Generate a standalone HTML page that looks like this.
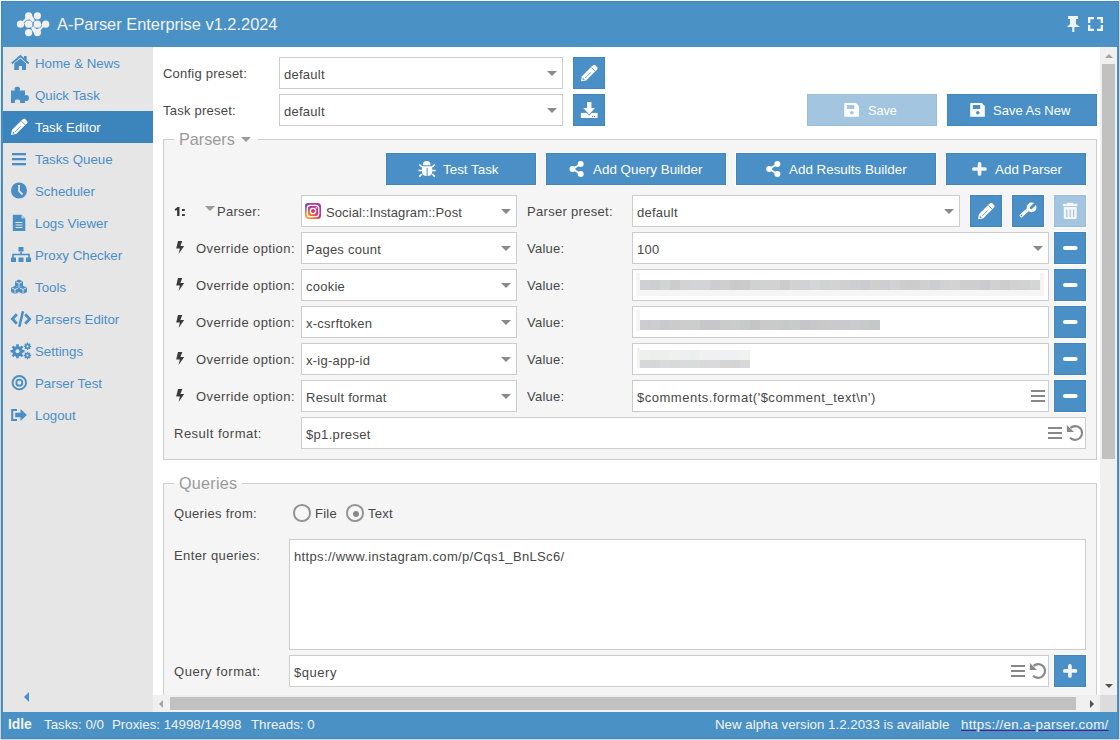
<!DOCTYPE html>
<html><head><meta charset="utf-8">
<style>
*{box-sizing:border-box;margin:0;padding:0}
html,body{width:1120px;height:740px;overflow:hidden;background:#fbfaf8;font-family:"Liberation Sans",sans-serif;color:#333}
.a{position:absolute}
#frame{left:1px;top:1px;width:1118px;height:738px;background:#4a91c6;border:1px solid #3f88c1}
#hdr-title{left:57px;top:13px;font-size:16.4px;color:#f2f2f2;line-height:22px;white-space:nowrap}
#side{left:3px;top:47px;width:150px;height:665px;background:#e6e6e6}
.si{left:0;width:150px;height:32px;line-height:34px;font-size:13.3px;color:#4a8ec6;white-space:nowrap}
.si span{position:absolute;left:32px;top:0}
.si svg{position:absolute;left:8px;top:8px}
.si.act{background:#3c84bc;color:#fff}
#content{left:153px;top:47px;width:964px;height:648px;background:#fff;overflow:hidden}
.lbl{font-size:13px;letter-spacing:0.25px;line-height:34px;height:32px;white-space:nowrap;color:#474747}
.inp{background:#fff;border:1px solid #ccc;height:32px;font-size:13px;letter-spacing:0.25px;line-height:34px;padding-left:4px;white-space:nowrap;color:#474747}
.tri{position:absolute;width:0;height:0;border-left:5px solid transparent;border-right:5px solid transparent;border-top:5px solid #8a8a8a}
.btn{background:#4a8fc5;border:1px solid #4086be;box-shadow:0 0 0 1px #fff;height:32px;color:#fff;font-size:13.4px;line-height:34px;white-space:nowrap}
.btn.dis{background:#a3c5e0;border-color:#98bedb}
.btn span{position:absolute;top:-1px;margin-left:-1px}
.btn svg{position:absolute}
.fs{border:1px solid #cdcdcd;border-top:0;background:#f5f5f5}
.ln{background:#cdcdcd;height:1px}
.legend{position:absolute;font-size:16.2px;color:#9a9a9a;line-height:20px;white-space:nowrap}
.legbg{position:absolute;background:#fff;height:10px}
#status{left:3px;top:712px;width:1114px;height:27px;}
.st{font-size:13.3px;color:#f4f4f4;line-height:25px;top:0;white-space:nowrap}
.radio{width:17.5px;height:17.5px;border:2px solid #959595;border-radius:50%;background:#f7f7f7}
.radio i{position:absolute;left:4.75px;top:4.75px;width:6px;height:6px;border-radius:50%;background:#8a8a8a}
</style></head><body>
<div id="frame" class="a"></div>
<div class="a" style="left:1119px;top:0;width:1px;height:740px;background:#dcd6d0"></div>
<div class="a" style="left:0;top:40px;width:1px;height:700px;background:linear-gradient(#f4f1ee,#d9d1cb 30%)"></div>
<div class="a" style="left:0;top:739px;width:1120px;height:1px;background:#dcd6d0"></div>
<!-- header -->
<div id="hdr-title" class="a">A-Parser Enterprise v1.2.2024</div>

<div id="side" class="a">
  <div class="si a" style="top:0"><span>Home &amp; News</span></div>
  <div class="si a" style="top:32px"><span>Quick Task</span></div>
  <div class="si a act" style="top:64px"><span>Task Editor</span></div>
  <div class="si a" style="top:96px"><span>Tasks Queue</span></div>
  <div class="si a" style="top:128px"><span>Scheduler</span></div>
  <div class="si a" style="top:160px"><span>Logs Viewer</span></div>
  <div class="si a" style="top:192px"><span>Proxy Checker</span></div>
  <div class="si a" style="top:224px"><span>Tools</span></div>
  <div class="si a" style="top:256px"><span>Parsers Editor</span></div>
  <div class="si a" style="top:288px"><span>Settings</span></div>
  <div class="si a" style="top:320px"><span>Parser Test</span></div>
  <div class="si a" style="top:352px"><span>Logout</span></div>
</div>

<div id="content" class="a"><div class="a" style="left:-153px;top:-47px;width:1120px;height:740px">
  <div class="lbl a" style="left:163px;top:57px;letter-spacing:0.22px">Config preset:</div>
  <div class="inp a" style="left:279px;top:57px;width:284px">default<i class="tri" style="left:267px;top:13px"></i></div>
  <div class="btn a" style="left:573px;top:57px;width:32px"></div>
  <div class="lbl a" style="left:163px;top:94px;letter-spacing:0.24px">Task preset:</div>
  <div class="inp a" style="left:279px;top:94px;width:284px">default<i class="tri" style="left:267px;top:13px"></i></div>
  <div class="btn a" style="left:573px;top:94px;width:32px"></div>
  <div class="btn dis a" style="left:807px;top:94px;width:130px"><span style="left:61px;font-size:12.6px">Save</span></div>
  <div class="btn a" style="left:947px;top:94px;width:150px"><span style="left:46px;font-size:13px">Save As New</span></div>

  <div class="fs a" style="left:163px;top:139px;width:934px;height:321px"></div>
  <div class="ln a" style="left:163px;top:139px;width:11px"></div><div class="ln a" style="left:258px;top:139px;width:839px"></div>
  <div class="legend a" style="left:179px;top:129px">Parsers</div>
  <i class="tri" style="left:241px;top:137px;border-top-color:#9a9a9a"></i>

  <div class="btn a" style="left:386px;top:153px;width:150px"><span style="left:57px">Test Task</span></div>
  <div class="btn a" style="left:546px;top:153px;width:180px"><span style="left:47px">Add Query Builder</span></div>
  <div class="btn a" style="left:736px;top:153px;width:200px"><span style="left:53px">Add Results Builder</span></div>
  <div class="btn a" style="left:946px;top:153px;width:140px"><span style="left:49px">Add Parser</span></div>

  
  <i class="tri" style="left:205px;top:206px;border-top-color:#9a9a9a"></i>
  <div class="lbl a" style="left:217px;top:195px">Parser:</div>
  <div class="inp a" style="left:301px;top:195px;width:216px;padding-left:24px;letter-spacing:0.1px">Social::Instagram::Post<i class="tri" style="left:199px;top:13px"></i></div>
  <div class="lbl a" style="left:527px;top:195px;letter-spacing:0.3px">Parser preset:</div>
  <div class="inp a" style="left:632px;top:195px;width:328px">default<i class="tri" style="left:311px;top:13px"></i></div>
  <div class="btn a" style="left:970px;top:195px;width:32px"></div>
  <div class="btn a" style="left:1012px;top:195px;width:32px"></div>
  <div class="btn dis a" style="left:1054px;top:195px;width:32px"></div>
  <div class="lbl a" style="font-size:13px;letter-spacing:0.4px;left:196px;top:232px">Override option:</div>
  <div class="inp a" style="left:301px;top:232px;width:216px">Pages count<i class="tri" style="left:199px;top:13px"></i></div>
  <div class="lbl a" style="left:527px;top:232px">Value:</div>
  <div class="inp a" style="left:632px;top:232px;width:417px">100<i class="tri" style="left:400px;top:13px"></i></div>
  <div class="btn a" style="left:1054px;top:232px;width:32px"></div>
  <div class="lbl a" style="font-size:13px;letter-spacing:0.4px;left:196px;top:269px">Override option:</div>
  <div class="inp a" style="left:301px;top:269px;width:216px">cookie<i class="tri" style="left:199px;top:13px"></i></div>
  <div class="lbl a" style="left:527px;top:269px">Value:</div>
  <div class="inp a" style="left:632px;top:269px;width:417px"></div>
  <div class="btn a" style="left:1054px;top:269px;width:32px"></div>
  <div class="lbl a" style="font-size:13px;letter-spacing:0.4px;left:196px;top:306px">Override option:</div>
  <div class="inp a" style="left:301px;top:306px;width:216px">x-csrftoken<i class="tri" style="left:199px;top:13px"></i></div>
  <div class="lbl a" style="left:527px;top:306px">Value:</div>
  <div class="inp a" style="left:632px;top:306px;width:417px"></div>
  <div class="btn a" style="left:1054px;top:306px;width:32px"></div>
  <div class="lbl a" style="font-size:13px;letter-spacing:0.4px;left:196px;top:343px">Override option:</div>
  <div class="inp a" style="left:301px;top:343px;width:216px">x-ig-app-id<i class="tri" style="left:199px;top:13px"></i></div>
  <div class="lbl a" style="left:527px;top:343px">Value:</div>
  <div class="inp a" style="left:632px;top:343px;width:417px"></div>
  <div class="btn a" style="left:1054px;top:343px;width:32px"></div>
  <div class="lbl a" style="font-size:13px;letter-spacing:0.4px;left:196px;top:380px">Override option:</div>
  <div class="inp a" style="left:301px;top:380px;width:216px">Result format<i class="tri" style="left:199px;top:13px"></i></div>
  <div class="lbl a" style="left:527px;top:380px">Value:</div>
  <div class="inp a" style="left:632px;top:380px;width:417px"><span style="letter-spacing:0.51px">$comments.format('$comment_text\n')</span></div>
  <div class="btn a" style="left:1054px;top:380px;width:32px"></div>

  <div class="a" style="left:636px;top:273px;width:4px;height:23px;background:#f6f5f4"></div>
<div class="a" style="left:640px;top:280px;width:400px;height:10px;background:linear-gradient(90deg,#ced1d1 0px 10px,#cdced0 10px 20px,#d2d5d1 20px 30px,#cbcdcc 30px 40px,#d3d3d3 40px 50px,#d2d5d5 50px 60px,#d2d4d6 60px 70px,#cdcdd1 70px 80px,#cdd0cf 80px 90px,#cbcacb 90px 100px,#cbccca 100px 110px,#cfd1d2 110px 120px,#d1d3d3 120px 130px,#d2d2d3 130px 140px,#cccbcc 140px 150px,#d2d2d3 150px 160px,#d1d2d3 160px 170px,#d3d5d6 170px 180px,#d0d3d3 180px 190px,#d1d4d1 190px 200px,#d0cfd1 200px 210px,#cdced0 210px 220px,#ccccd0 220px 230px,#cfd0ce 230px 240px,#ccced0 240px 250px,#d2d1d3 250px 260px,#cccecc 260px 270px,#cbcccd 270px 280px,#d1d0d0 280px 290px,#cbcdcf 290px 300px,#d0d3d1 300px 310px,#d3d3d2 310px 320px,#cfcece 320px 330px,#cccfcf 330px 340px,#cbcbcd 340px 350px,#cfd2d0 350px 360px,#cdccce 360px 370px,#d0d1d0 370px 380px,#d1d3d3 380px 390px,#d3d5d7 390px 400px)"></div>
<div class="a" style="left:640px;top:290px;width:404px;height:6px;background:#f5f5f5"></div>
<div class="a" style="left:1040px;top:273px;width:4px;height:23px;background:#f4f4f4"></div>
<div class="a" style="left:636px;top:310px;width:4px;height:21px;background:#f6f5f4"></div>
<div class="a" style="left:640px;top:320px;width:240px;height:10px;background:linear-gradient(90deg,#cdccd0 0px 10px,#cdcecf 10px 20px,#c8c9ca 20px 30px,#c9ccca 30px 40px,#cdcecc 40px 50px,#cbcecc 50px 60px,#c5c7c8 60px 70px,#c7c6cb 70px 80px,#cacccb 80px 90px,#cacdce 90px 100px,#c9cbc8 100px 110px,#c5c4c6 110px 120px,#c9cbca 120px 130px,#cacacb 130px 140px,#c7c8c8 140px 150px,#c9cacb 150px 160px,#c6c5c9 160px 170px,#c7c8ca 170px 180px,#c8c9c8 180px 190px,#cacace 190px 200px,#cbcaca 200px 210px,#cacbce 210px 220px,#c8cac8 220px 230px,#c6c7ca 230px 240px)"></div>
<div class="a" style="left:637px;top:348px;width:3px;height:20px;background:#f3f2f0"></div>
<div class="a" style="left:640px;top:350px;width:110px;height:10px;background:linear-gradient(90deg,#edf0ef 0px 10px,#eeeeed 10px 20px,#ecefec 20px 30px,#eef1ee 30px 40px,#eeeff2 40px 50px,#ecefed 50px 60px,#f0f0f2 60px 70px,#eef1ef 70px 80px,#eff0f3 80px 90px,#eff0f1 90px 100px,#f0f2ef 100px 110px)"></div>
<div class="a" style="left:640px;top:360px;width:110px;height:8px;background:linear-gradient(90deg,#d7d7d7 0px 10px,#d4d6d7 10px 20px,#d8dadb 20px 30px,#d9d9d8 30px 40px,#d9dbdd 40px 50px,#d9dcda 50px 60px,#d8d9d8 60px 70px,#dad9dd 70px 80px,#d6d5d6 80px 90px,#d4d3d8 90px 100px,#d8d8da 100px 110px)"></div>
  <div class="lbl a" style="left:174px;top:417px;letter-spacing:0.5px">Result format:</div>
  <div class="inp a" style="left:301px;top:417px;width:785px;letter-spacing:0.33px">$p1.preset</div>

  <div class="fs a" style="left:163px;top:483px;width:934px;height:300px"></div>
  <div class="ln a" style="left:163px;top:483px;width:11px"></div><div class="ln a" style="left:242px;top:483px;width:855px"></div>
  <div class="legend a" style="left:179px;top:473px;letter-spacing:0.25px">Queries</div>
  <div class="lbl a" style="left:174px;top:497px;letter-spacing:0.33px">Queries from:</div>
  <div class="a radio" style="left:293px;top:504px"></div>
  <div class="lbl a" style="left:315px;top:497px">File</div>
  <div class="a radio" style="left:346px;top:504px"><i></i></div>
  <div class="lbl a" style="left:368px;top:497px">Text</div>
  <div class="lbl a" style="left:174px;top:539px;line-height:33px;letter-spacing:0.38px">Enter queries:</div>
  <div class="inp a" style="left:289px;top:539px;width:797px;height:111px;line-height:33px;letter-spacing:0.35px">https://www.instagram.com/p/Cqs1_BnLSc6/</div>
  <div class="lbl a" style="left:174px;top:655px;letter-spacing:0.55px">Query format:</div>
  <div class="inp a" style="left:289px;top:655px;width:760px;letter-spacing:0.54px">$query</div>
  <div class="btn a" style="left:1054px;top:655px;width:32px"></div>
</div></div>
<!-- scrollbars -->
<div class="a" style="left:1100px;top:47px;width:17px;height:648px;background:#f0f0f0"></div>
<div class="a" style="left:1102px;top:64px;width:13px;height:395px;background:#c1c1c1"></div>
<i class="tri" style="left:1105px;top:54px;border-top:0;border-bottom:4px solid #a3a3a3;border-left-width:4px;border-right-width:4px"></i>
<i class="tri" style="left:1105px;top:684px;border-top:4px solid #505050;border-left-width:4px;border-right-width:4px"></i>
<div class="a" style="left:153px;top:695px;width:947px;height:17px;background:#f0f0f0"></div>
<div class="a" style="left:170px;top:697px;width:906px;height:13px;background:#c1c1c1"></div>
<i class="tri" style="left:159px;top:700px;border:0;border-top:4px solid transparent;border-bottom:4px solid transparent;border-right:4px solid #a3a3a3"></i>
<i class="tri" style="left:1090px;top:700px;border:0;border-top:4px solid transparent;border-bottom:4px solid transparent;border-left:4px solid #505050"></i>
<div class="a" style="left:1100px;top:695px;width:17px;height:17px;background:#dcdcdc"></div>


<div id="status" class="a">
  <div class="st a" style="left:5px;font-weight:bold;font-size:13.8px">Idle</div>
  <div class="st a" style="left:41px">Tasks: 0/0</div>
  <div class="st a" style="left:109px">Proxies: 14998/14998</div>
  <div class="st a" style="left:248px">Threads: 0</div>
  <div class="st a" style="left:712px">New alpha version 1.2.2033 is available</div>
  <div class="st a" style="left:958px;font-size:13.3px;letter-spacing:0.33px;text-decoration:underline;text-decoration-color:#551a8b">https://en.a-parser.com/</div>
</div>
<svg class="a" style="left:0;top:0;pointer-events:none" width="1120" height="740" viewBox="0 0 1120 740">
<defs>
 <linearGradient id="ig" x1="0" y1="1" x2="1" y2="0">
  <stop offset="0" stop-color="#fdc45a"/><stop offset="0.28" stop-color="#f97a2e"/><stop offset="0.5" stop-color="#e3325f"/><stop offset="0.72" stop-color="#c5348c"/><stop offset="1" stop-color="#9b36b7"/>
 </linearGradient>
 <radialGradient id="ig2" cx="0.05" cy="0.05" r="0.6">
  <stop offset="0" stop-color="#4f5bd5" stop-opacity="1"/><stop offset="1" stop-color="#4f5bd5" stop-opacity="0"/>
 </radialGradient>
 <g id="pencil"><path d="M0,16.5 L0.9,11.5 L10.6,1.8 L12.3,0.4 Q13.3,-0.3 14.3,0.5 L16.2,2.4 Q17,3.4 16.3,4.4 L14.8,5.9 L5.1,15.6 Z"/><path d="M10.4,2.6 L14.3,6.5 M4.2,13.2 L9.8,7.6" stroke="currentColor" stroke-width="0.8" fill="none"/><path d="M1.9,12.9 L1.6,15.2 L3.8,14.9 Z" fill="currentColor"/></g>
 <g id="floppy"><path d="M0,0.5 Q0,0 0.5,0 H11.6 L14.6,3 V13.3 Q14.6,13.8 14.1,13.8 H0.5 Q0,13.8 0,13.3 Z M2.6,2.1 V5.9 H10 V2.1 Z" fill-rule="evenodd"/></g>
 <g id="share"><circle cx="3" cy="8" r="3"/><circle cx="11.2" cy="2.9" r="3"/><circle cx="11.2" cy="13.1" r="3"/><path d="M3,8 L11.2,2.9 M3,8 L11.2,13.1" stroke="#fff" stroke-width="1.8"/></g>
 <g id="hamb" fill="#888"><rect x="0" y="0" width="14" height="2"/><rect x="0" y="5" width="14" height="2"/><rect x="0" y="10" width="14" height="2"/></g>
 <g id="undo"><path d="M-4.6,-5.0 A6.9,6.9 0 1 1 -5,4.8" fill="none" stroke="#888" stroke-width="2.2"/><path d="M-8.2,-7.9 V-1 H-1.1 Z" fill="#888"/></g>
 <g id="bolt"><path d="M2,0 H6.3 L4.4,5 H8.2 L2.6,13 L3.9,7.6 H0.2 Z" fill="#3a3a3a"/></g>
 <g id="minus"><rect x="0" y="0" width="14.6" height="4" rx="2" fill="#fff"/></g>
</defs>
<!-- logo -->
<g fill="#f0f0f0">
 <path d="M20.5,24.2 Q25.5,22.5 28.6,15.8" stroke="#f0f0f0" stroke-width="3.4" fill="none"/>
 <path d="M45.7,24.2 Q40.5,25.9 37.4,32.6" stroke="#f0f0f0" stroke-width="3.4" fill="none"/>
 <path d="M28.6,15.8 C32,17.5 33,21 33,24.2 C33,27.4 34,30.9 37.4,32.6" stroke="#f0f0f0" stroke-width="4.2" fill="none"/>
 <circle cx="28.6" cy="15.8" r="3.6"/><circle cx="37.4" cy="15.8" r="3.6"/><circle cx="20.5" cy="24.2" r="3.6"/>
 <circle cx="45.7" cy="24.2" r="3.6"/><circle cx="28.6" cy="32.6" r="3.6"/><circle cx="37.4" cy="32.6" r="3.6"/>
 <path d="M24.3,23.2 A4.3,4.3 0 1 1 31.8,27.1" stroke="#4a91c6" stroke-width="1" fill="none"/>
 <path d="M41.7,25.2 A4.3,4.3 0 1 1 34.2,21.3" stroke="#4a91c6" stroke-width="1" fill="none"/>
 <circle cx="28.6" cy="24.2" r="3.6"/><circle cx="37.4" cy="24.2" r="3.6"/>
</g>
<!-- pin & expand -->
<g fill="#eef3f8">
 <rect x="1068" y="16" width="10" height="3"/><rect x="1070" y="19" width="6" height="5"/>
 <path d="M1070,24 H1076 L1080,27 H1067 Z"/><rect x="1072.2" y="27" width="2.2" height="5"/>
 <path d="M1088,17 H1094 V19.3 H1090.3 V23 H1088 Z"/>
 <path d="M1103,17 H1097 V19.3 H1100.7 V23 H1103 Z"/>
 <path d="M1088,31 H1094 V28.7 H1090.3 V25 H1088 Z"/>
 <path d="M1103,31 H1097 V28.7 H1100.7 V25 H1103 Z"/>
</g>
<!-- sidebar icons -->
<g fill="#4a8ec6">
 <path d="M11.8,63.5 L20.3,56 L28.8,63.5" fill="none" stroke="#4a8ec6" stroke-width="1.9"/>
 <rect x="24" y="56" width="2.6" height="4.5"/>
 <path d="M14.3,63.3 L20.3,58.4 L26,63.3 V70 H22 V66 H18.8 V70 H14.3 Z"/>
 <!-- puzzle -->
 <path d="M11,90.5 H15.2 Q14.2,89.5 14.6,88.2 Q15.2,86.8 17.3,86.8 Q19.4,86.8 20,88.2 Q20.4,89.5 19.4,90.5 H25 V95.5 Q26,94.8 27.2,95 Q29,95.5 29,98 Q29,100.5 27.2,101 Q26,101.2 25,100.5 V103 H19.8 Q20.6,102 20.2,100.8 Q19.6,99.5 17.5,99.5 Q15.4,99.5 14.8,100.8 Q14.4,102 15.2,103 H11 Z"/>
 <!-- bars -->
 <rect x="12" y="153" width="14" height="2.3"/><rect x="12" y="158" width="14" height="2.3"/><rect x="12" y="163" width="14" height="2.3"/>
 <!-- clock -->
 <circle cx="19" cy="190.5" r="8"/>
 <path d="M19,185 V191 L22.5,194.5" stroke="#e6e6e6" stroke-width="1.8" fill="none"/>
 <!-- file -->
 <path d="M12.8,214.8 H21.5 L25.3,218.6 V231 H12.8 Z"/>
 <path d="M15.5,222.5 H22.5 M15.5,225 H22.5 M15.5,227.5 H22.5" stroke="#e6e6e6" stroke-width="1"/>
 <path d="M21.5,214.8 V218.6 H25.3" fill="#b9d2e8"/>
 <!-- sitemap -->
 <rect x="18.5" y="247" width="5" height="4.5"/>
 <path d="M21,251.5 V254.5 M13,258 V254.5 H29 V258" stroke="#4a8ec6" stroke-width="1.6" fill="none"/>
 <rect x="11" y="257.5" width="5" height="4.5"/><rect x="18.5" y="257.5" width="5" height="4.5"/><rect x="26" y="257.5" width="5" height="4.5"/>
 <!-- cubes -->
 <path d="M15,281.5 L19,279.5 L23,281.5 V285.8 L19,287.8 L15,285.8 Z"/><path d="M15.8,281.8 L19,283.3 L22.2,281.8 M19,283.3 V287.5" stroke="#e6e6e6" stroke-width="0.9" fill="none"/><path d="M11,287.7 L15,285.7 L19,287.7 V292.0 L15,294.0 L11,292.0 Z"/><path d="M11.8,288.0 L15,289.5 L18.2,288.0 M15,289.5 V293.7" stroke="#e6e6e6" stroke-width="0.9" fill="none"/><path d="M19,287.7 L23,285.7 L27,287.7 V292.0 L23,294.0 L19,292.0 Z"/><path d="M19.8,288.0 L23,289.5 L26.2,288.0 M23,289.5 V293.7" stroke="#e6e6e6" stroke-width="0.9" fill="none"/>
 <!-- code -->
 <path d="M16.8,314.2 L12.4,319 L16.8,323.8 M25.2,314.2 L29.6,319 L25.2,323.8" stroke="#4a8ec6" stroke-width="2.8" fill="none"/>
 <path d="M23,311.3 L19.3,326.7" stroke="#4a8ec6" stroke-width="2.5"/>
 <!-- cogs -->
 <circle cx="17.5" cy="351.3" r="5.3"/>
 <path d="M17.5,344.3 V358.3 M10.5,351.3 H24.5 M12.5,346.3 L22.5,356.3 M22.5,346.3 L12.5,356.3" stroke="#4a8ec6" stroke-width="2.6"/>
 <circle cx="17.5" cy="351.3" r="2" fill="#e6e6e6"/>
 <circle cx="27.5" cy="346.3" r="2.7"/><circle cx="27.5" cy="355.5" r="2.7"/>
 <path d="M27.5,342.6 V350 M23.8,346.3 H31.2 M24.9,343.7 L30.1,348.9 M30.1,343.7 L24.9,348.9 M27.5,351.8 V359.2 M23.8,355.5 H31.2 M24.9,352.9 L30.1,358.1 M30.1,352.9 L24.9,358.1" stroke="#4a8ec6" stroke-width="1.3"/>
 <circle cx="27.5" cy="346.3" r="1.1" fill="#e6e6e6"/><circle cx="27.5" cy="355.5" r="1.1" fill="#e6e6e6"/>
 <!-- bullseye -->
 <circle cx="19.3" cy="382.7" r="6.7" fill="none" stroke="#4a8ec6" stroke-width="1.9"/>
 <circle cx="19.3" cy="382.7" r="3" fill="none" stroke="#4a8ec6" stroke-width="1.8"/>
 <!-- logout -->
 <path d="M17,410 H12.2 V420 H17" fill="none" stroke="#4a8ec6" stroke-width="2"/>
 <path d="M15.2,412.8 H20.5 V409 L26.9,415 L20.5,421 V417.2 H15.2 Z"/>
 <!-- collapse -->
 <path d="M29,692 V702 L24,697 Z"/>
</g>
<!-- active pencil -->
<use href="#pencil" x="11" y="118.5" fill="#fff" style="color:#3c84bc"/>
<!-- button icons -->
<g fill="#fff">
 <use href="#pencil" x="581" y="64.8" style="color:#4a8fc5"/>
 <rect x="580.9" y="112.9" width="16.7" height="5.1"/>
 <path d="M587.1,102 H591.4 V108 H594.9 L589.2,114.4 L583.3,108 H587.1 Z" stroke="#4a8fc5" stroke-width="1.8" paint-order="stroke"/>
 <use href="#floppy" x="844.3" y="103"/>
 <use href="#floppy" x="970.2" y="103"/>
 <!-- bug -->
 <path d="M422.9,168.2 A3.8,4.2 0 0 1 430.5,168.2 Z" transform="translate(0,-3)"/>
 <path d="M422,166.3 H432.2 V172 Q432.2,176 427.1,176 Q422,176 422,172 Z"/>
 <path d="M422,167 L419.3,164.5 M432.2,167 L434.8,164.5 M422,170.5 H418.5 M432.2,170.5 H435.6 M422,174 L419.3,176.6 M432.2,174 L434.8,176.6" stroke="#fff" stroke-width="1.7"/>
 <path d="M427.1,168 V176" stroke="#4a8fc5" stroke-width="1"/>
 <use href="#share" x="569.5" y="161"/>
 <use href="#share" x="766.2" y="161"/>
 <path d="M979.55,163.8 V174 M973.9,169 H985" stroke="#f4f4f4" stroke-width="3.7" stroke-linecap="round"/>
 <use href="#pencil" x="978" y="202.8" style="color:#4a8fc5"/>
 <!-- wrench -->
 <path d="M1021.2,215.6 L1029,208.8" stroke="#fff" stroke-width="3.4" stroke-linecap="round"/>
 <circle cx="1031.6" cy="207.4" r="4.9"/>
 <path d="M1031.2,207.8 L1036.5,202.5" stroke="#4a8fc5" stroke-width="2.8" stroke-linecap="round"/>
 <circle cx="1021.4" cy="215.4" r="0.8" fill="#4a8fc5"/>
 <!-- trash -->
 <g fill="#f4f6f8">
 <rect x="1062.9" y="203.8" width="14.6" height="2.3"/><rect x="1067" y="202.8" width="6.3" height="1.3" rx="0.5"/>
 <path d="M1063.8,207 H1076.7 V218 Q1076.7,219 1075.7,219 H1064.8 Q1063.8,219 1063.8,218 Z"/>
 </g>
 <path d="M1066.8,209.5 V217 M1070.2,209.5 V217 M1073.6,209.5 V217" stroke="#a3c5e0" stroke-width="1.2"/>
 <!-- query plus -->
 <path d="M1069.9,665.8 V676 M1064.8,670.9 H1075.5" stroke="#f4f4f4" stroke-width="3.7" stroke-linecap="round"/>
</g>
<!-- download tray notch -->

<circle cx="592.6" cy="116.4" r="0.6" fill="#6a6acc"/><circle cx="594.6" cy="116.4" r="0.6" fill="#6a6acc"/>
<!-- floppy circles -->
<circle cx="851.9" cy="112.8" r="1.8" fill="#a3c5e0"/><circle cx="977.8" cy="112.8" r="1.8" fill="#4a8fc5"/>
<!-- minus icons -->
<use href="#minus" x="1063" y="246"/><use href="#minus" x="1063" y="283"/><use href="#minus" x="1063" y="320"/><use href="#minus" x="1063" y="357"/><use href="#minus" x="1063" y="394"/>
<!-- bolts -->
<use href="#bolt" x="176" y="241"/><use href="#bolt" x="176" y="278"/><use href="#bolt" x="176" y="315"/><use href="#bolt" x="176" y="352"/><use href="#bolt" x="176" y="389"/>
<!-- "1:" -->
<g fill="#3a3a3a"><rect x="177.1" y="207" width="2.4" height="9"/><path d="M174.6,209.2 L177.8,207 L179.2,207.6 L178.6,209.4 L175.4,210.8 Z"/><rect x="182" y="209" width="2.8" height="2"/><rect x="182" y="214" width="2.8" height="2"/></g>
<!-- instagram -->
<rect x="305" y="203" width="16" height="16" rx="3.5" fill="url(#ig)"/><rect x="305" y="203" width="16" height="16" rx="3.5" fill="url(#ig2)"/>
<rect x="307.3" y="205.3" width="11.4" height="11.4" rx="3" fill="none" stroke="#fff" stroke-width="1.3"/>
<circle cx="313" cy="211" r="2.7" fill="none" stroke="#fff" stroke-width="1.3"/>
<circle cx="316.3" cy="207.7" r="0.7" fill="#fff"/>
<!-- input icons -->
<use href="#hamb" x="1031" y="390"/>
<use href="#hamb" x="1048" y="427"/>
<use href="#undo" x="1075.1" y="432.9"/>
<use href="#hamb" x="1011" y="665"/>
<use href="#undo" x="1038.1" y="670.9"/>
</svg>

</body></html>
